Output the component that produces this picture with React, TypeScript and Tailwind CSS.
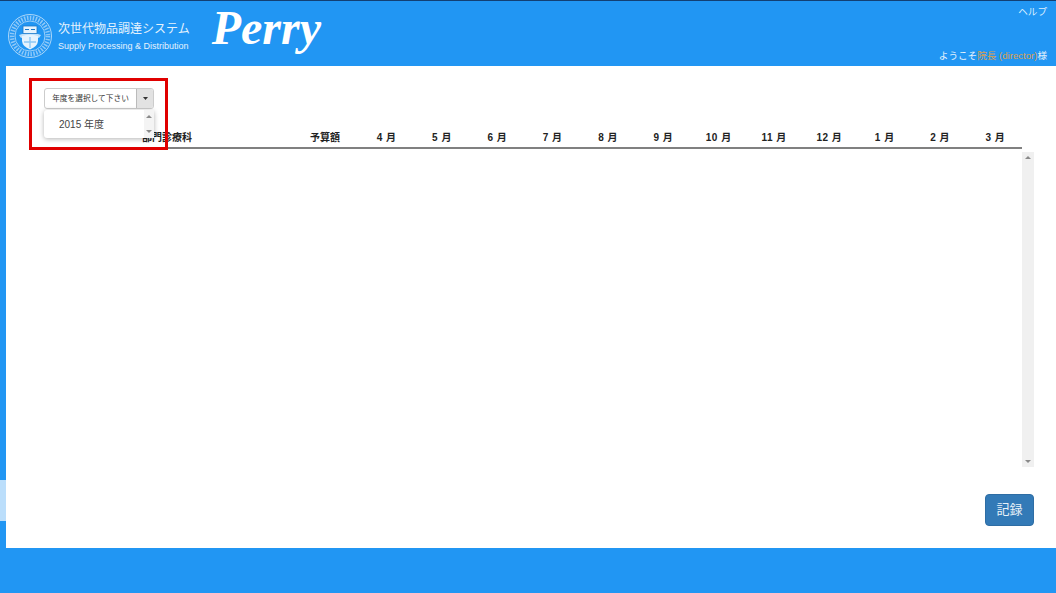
const cjk = "font-['Liberation_Sans','Noto_Sans_CJK_JP',sans-serif]";
const months = ['4 月','5 月','6 月','7 月','8 月','9 月','10 月','11 月','12 月','1 月','2 月','3 月'];

function Seal() {
  return (
    <svg width="46" height="46" viewBox="0 0 46 46" fill="none" className="shrink-0">
      <circle cx="23" cy="23" r="21.5" stroke="#cfe7fa" strokeWidth="0.8" />
      <circle cx="23" cy="23" r="18" stroke="#d5eafb" strokeWidth="4.5" strokeDasharray="1.5 1.4" opacity="0.6" />
      <circle cx="23" cy="23" r="15" stroke="#cfe7fa" strokeWidth="0.7" />
      <path d="M12 22 Q23 17 34 22 L32 25 Q23 21 14 25 Z" fill="#bfe0f9" />
      <rect x="16" y="13" width="14" height="7.5" fill="#e6f3fd" stroke="#1a78c9" strokeWidth="0.8" />
      <path d="M18 16.5h4M24 16.5h4" stroke="#1a78c9" strokeWidth="1" />
      <path d="M15 23 Q23 20 31 23 V28 Q30.5 33.5 23 36.5 Q15.5 33.5 15 28 Z" fill="#e6f3fd" />
      <path d="M23 24 V35 M17 29 H29" stroke="#8cc8f5" strokeWidth="1.4" />
    </svg>
  );
}

function Arrow({ up }: { up?: boolean }) {
  return (
    <svg width="6" height="3" viewBox="0 0 6 3">
      <path d={up ? 'M0 3 L3 0 L6 3 Z' : 'M0 0 L6 0 L3 3 Z'} fill="#8a8a8a" />
    </svg>
  );
}

export default function App() {
  return (
    <div className={`flex h-[593px] w-[1056px] flex-col overflow-hidden bg-[#2196f3] ${cjk}`}>
      <header className="flex h-[66px] shrink-0 border-t border-t-[#123f73] text-white">
        <div className="flex items-start pl-[7px] pt-[12px]">
          <Seal />
          <div className="ml-[5px] pt-[7px]">
            <div className="text-[12px] leading-[18px] text-[#e4f2fd]">次世代物品調達システム</div>
            <div className="mt-[2px] text-[9px] leading-[13px] text-[#e4f2fd]">Supply Processing &amp; Distribution</div>
          </div>
        </div>
        <div className="ml-[22px] mt-[-3px] font-['Liberation_Serif',serif] text-[48px] font-bold italic leading-[60px] text-white">
          Perry
        </div>
        <div className="ml-auto flex flex-col items-end justify-between pb-[3px] pr-[9px] pt-[4px] text-[9.6px] leading-[14px]">
          <div className="text-[#dcefff]">ヘルプ</div>
          <div className="text-[#e4f2fd]">ようこそ<span className="text-[#dca04e]">院長 (director)</span>様</div>
        </div>
      </header>

      <div className="flex min-h-0 flex-1">
        <div className="flex w-[6px] shrink-0 flex-col">
          <div className="h-[414px]" />
          <div className="h-[41px] bg-[#bbdefb]" />
        </div>
        <main className="relative flex min-w-0 flex-1 flex-col bg-white pl-[24px] pr-[22px] pt-[63px]">
          <div className="mr-[12px] flex h-[20px] items-end border-b-2 border-b-[#808080] text-[10px] font-bold leading-[14px] text-[#222]">
            <div className="w-[112px] shrink-0" />
            <div className="w-[168px] shrink-0 pb-[2px]">部門診療科</div>
            <div className="w-[49px] shrink-0 pb-[2px]">予算額</div>
            <div className="flex flex-1 pb-[2px]">
              {months.map((m) => (
                <div key={m} className="w-[55.35px] shrink-0 text-center tracking-[0.5px]">{m}</div>
              ))}
            </div>
          </div>

          <div className="mt-[3px] flex h-[315px] justify-end">
            <div className="flex w-[12px] flex-col items-center justify-between bg-[#f0f0f0] py-[4px]">
              <Arrow up />
              <Arrow />
            </div>
          </div>

          <div className="mt-[27px] flex justify-end">
            <button className="h-[32px] w-[49px] rounded-[4px] border border-[#2e6da4] bg-[#337ab7] text-[13px] text-[#e8f1f8]">記録</button>
          </div>

          <div className="absolute left-[23px] top-[12px] h-[72px] w-[139px] border-[3px] border-[#e00000]">
            <div className="ml-[12px] mt-[7px] flex h-[21px] w-[110px] rounded-[3px] border border-[#ccc] bg-white text-[#333]">
              <div className="flex flex-1 items-center justify-center text-[7.7px]">年度を選択して下さい</div>
              <div className="flex w-[17px] items-center justify-center rounded-r-[2px] border-l border-l-[#bbb] bg-[#e2e2e2]">
                <svg width="5" height="3" viewBox="0 0 5 3"><path d="M0 0H5L2.5 3Z" fill="#333" /></svg>
              </div>
            </div>
            <div className="ml-[12px] mt-[1px] flex h-[28px] w-[110px] rounded-[3px] bg-white shadow-[0_1px_5px_rgba(0,0,0,0.3)]">
              <div className="flex flex-1 items-center pl-[15px] text-[10px] text-[#444]">2015 年度</div>
              <div className="flex w-[10px] flex-col items-center justify-between bg-[#f4f4f4] py-[5px]">
                <Arrow up />
                <Arrow />
              </div>
            </div>
          </div>
        </main>
      </div>

      <footer className="h-[45px] shrink-0 bg-[#2196f3]" />
    </div>
  );
}
